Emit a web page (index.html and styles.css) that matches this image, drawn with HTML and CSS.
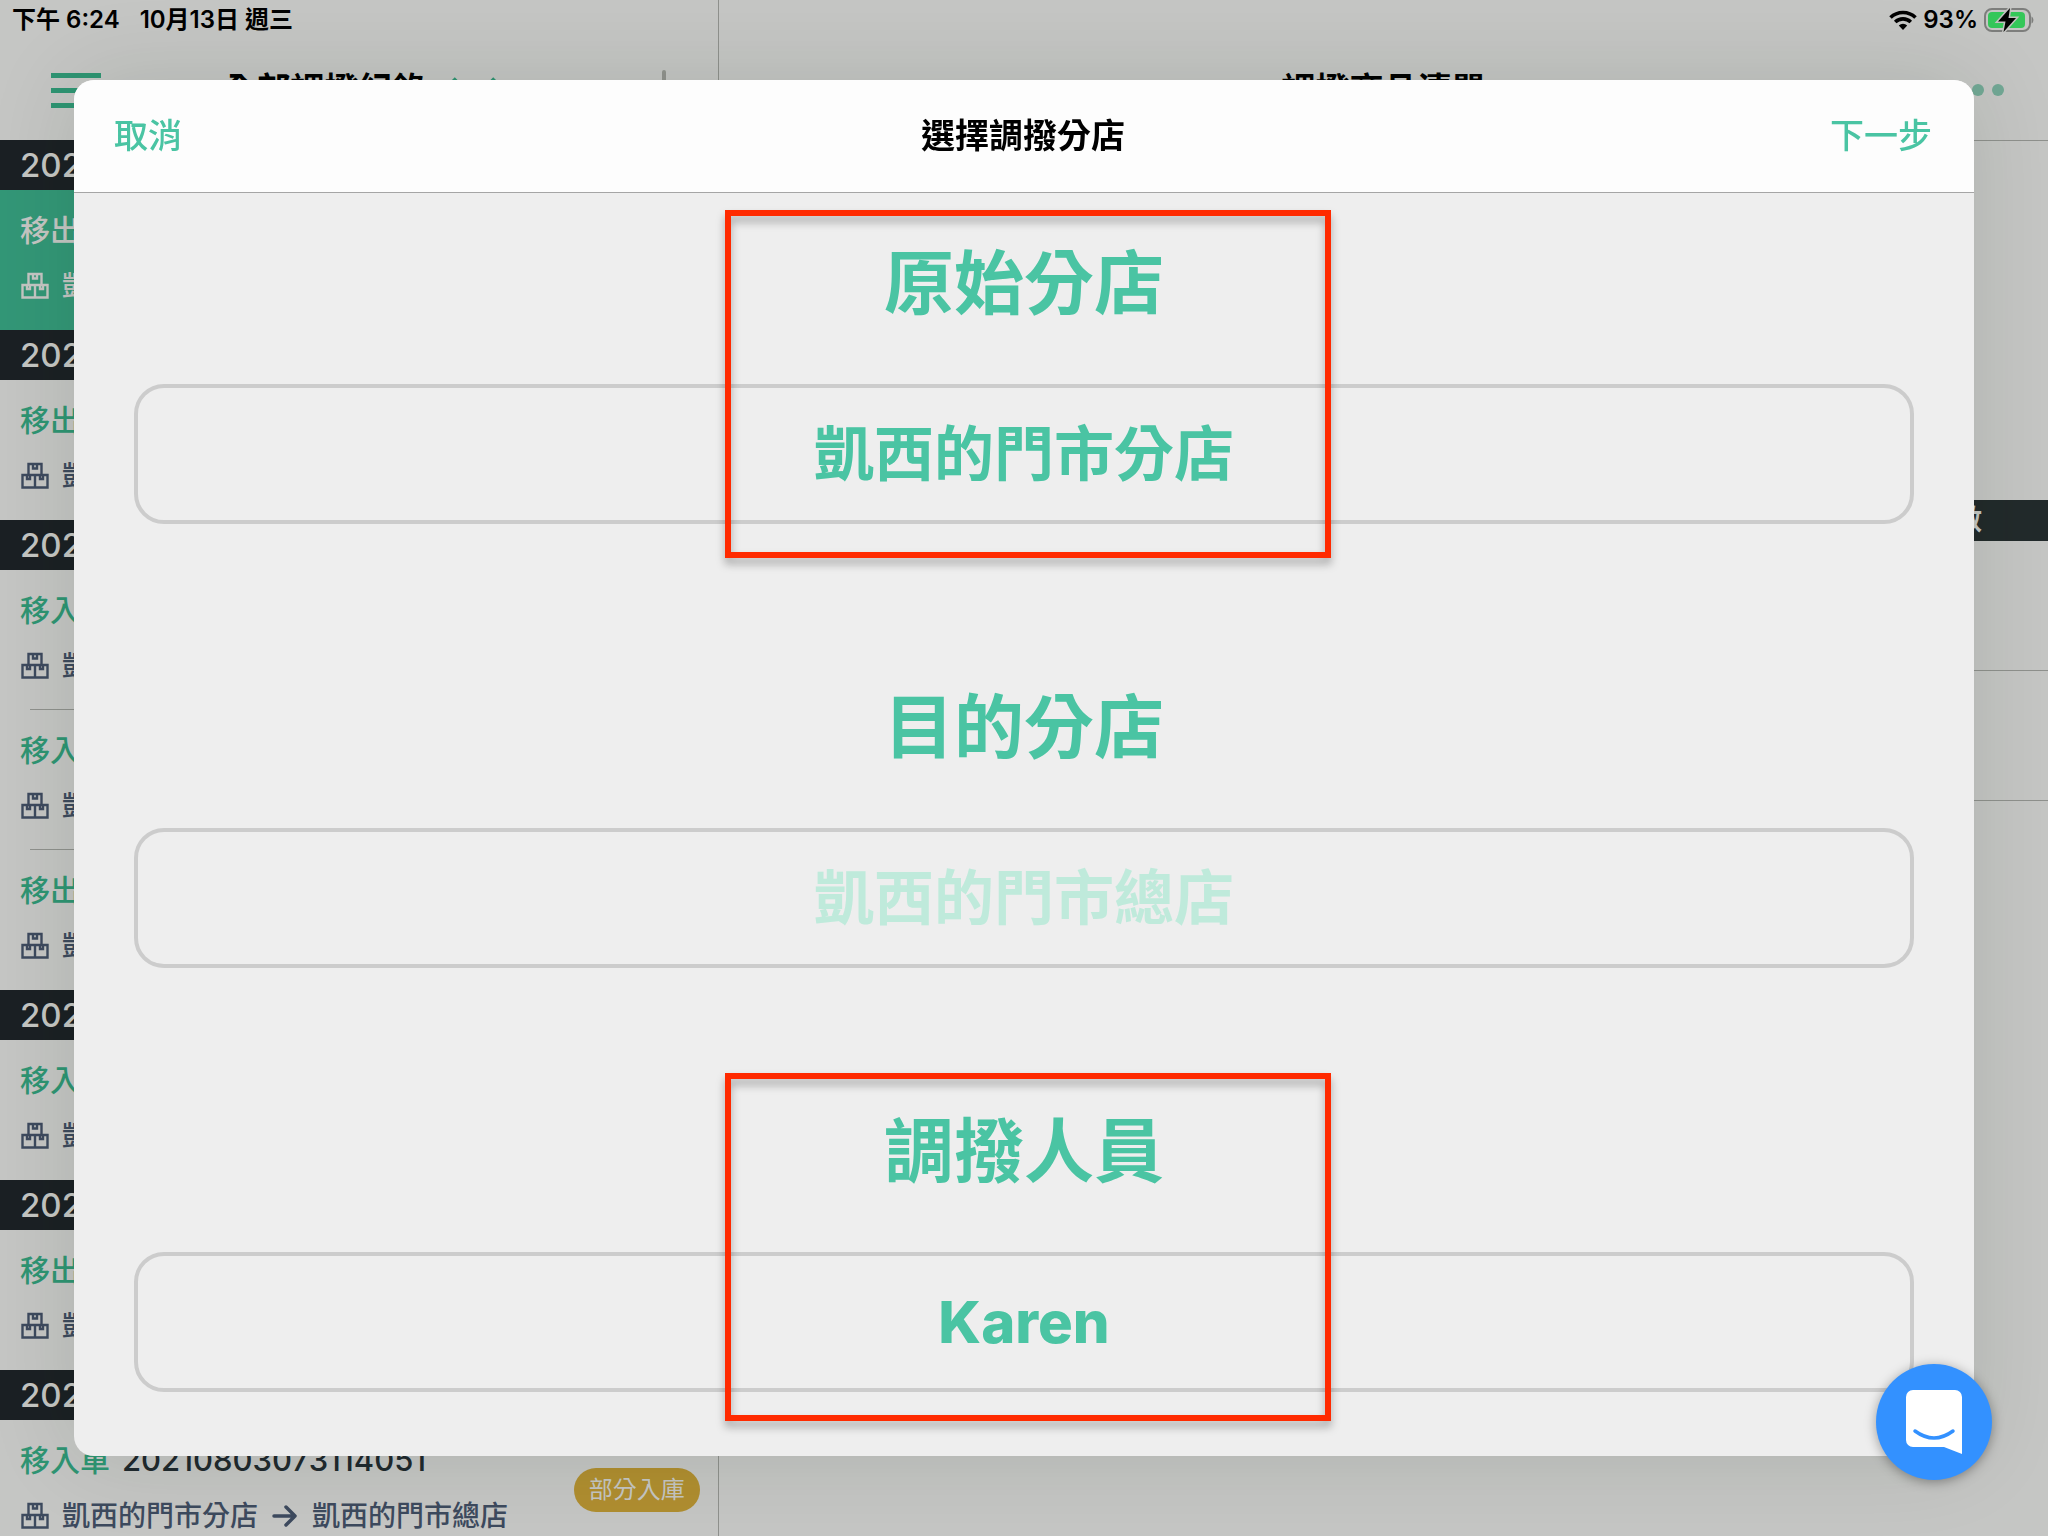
FILE: index.html
```html
<!DOCTYPE html>
<html lang="zh-Hant">
<head>
  <meta charset="UTF-8">
  <meta name="viewport" content="width=device-width, initial-scale=1.0">
  <title>選擇調撥分店</title>
  <link rel="stylesheet" href="styles.css">
</head>
<body>
  <svg class="sprite" aria-hidden="true">
    <symbol id="boxes" viewBox="0 0 28 28">
      <path d="M7.500 13V2h13v11M1.500 13h25v12.500h-25zM14 13v13M12 2v4.500h4V2M6 13v4h3v-4M19 13v4h3v-4" fill="none" stroke="currentColor" stroke-width="2.400"/>
    </symbol>
  </svg>

  <div class="page">
    <div class="status-bar">
      <div class="status-group">
        <span>下午 6:24</span>
        <span>10月13日 週三</span>
      </div>
      <div class="status-group status-right">
        <svg class="wifi" viewBox="0 0 28 20" aria-hidden="true">
          <path d="M1.500 7.500a18 18 0 0 1 25 0M6.200 12a11.300 11.300 0 0 1 15.600 0" fill="none" stroke="#000" stroke-width="3.600"/>
          <path d="M9.800 15.500a6 6 0 0 1 8.400 0L14 20z"/>
        </svg>
        <span>93%</span>
        <svg class="battery" viewBox="0 0 50 24" aria-hidden="true">
          <rect x="1" y="1" width="45" height="22" rx="7" fill="none" stroke="#7d7e7c" stroke-width="2"/>
          <rect x="4" y="4" width="37" height="16" rx="4" fill="#34c759"/>
          <path d="M47.500 8.500c2.500 1 2.500 6 0 7z" fill="#7d7e7c"/>
          <path d="M26 0L14 13.500h7.500L19.500 24 32 10h-7.500z" fill="#000" stroke="#c1c2bf" stroke-width="3" paint-order="stroke"/>
        </svg>
      </div>
    </div>

    <div class="panes">
      <aside class="sidebar">
        <div class="nav">
          <button class="menu" aria-label="選單"><span></span><span></span><span></span></button>
          <h2>全部調撥紀錄
            <svg class="chevron" viewBox="0 0 48 28" aria-hidden="true"><path d="M3 3l21 21L45 3" fill="none" stroke="#2f9573" stroke-width="5"/></svg>
          </h2>
          <button class="add" aria-label="新增">
            <svg viewBox="0 0 40 40" aria-hidden="true"><path d="M20 2v36M2 20h36" stroke="#92948f" stroke-width="4" stroke-linecap="round"/></svg>
          </button>
        </div>
        <div class="list">
          <h3>2021</h3>
          <div class="row active">
            <p class="order">移出單</p>
            <p class="route"><svg><use href="#boxes"/></svg>凱西</p>
          </div>
          <h3>2021</h3>
          <div class="row">
            <p class="order">移出單</p>
            <p class="route"><svg><use href="#boxes"/></svg>凱西</p>
          </div>
          <h3>2021</h3>
          <div class="row">
            <p class="order">移入單</p>
            <p class="route"><svg><use href="#boxes"/></svg>凱西</p>
          </div>
          <div class="row">
            <p class="order">移入單</p>
            <p class="route"><svg><use href="#boxes"/></svg>凱西</p>
          </div>
          <div class="row">
            <p class="order">移出單</p>
            <p class="route"><svg><use href="#boxes"/></svg>凱西</p>
          </div>
          <h3>2021</h3>
          <div class="row">
            <p class="order">移入單</p>
            <p class="route"><svg><use href="#boxes"/></svg>凱西</p>
          </div>
          <h3>2021</h3>
          <div class="row">
            <p class="order">移出單</p>
            <p class="route"><svg><use href="#boxes"/></svg>凱西</p>
          </div>
          <h3>2021</h3>
          <div class="row">
            <p class="order">移入單<span class="number">20210803073114051</span></p>
            <p class="route"><svg><use href="#boxes"/></svg>凱西的門市分店
              <svg class="arrow" viewBox="0 0 26 28"><path d="M2 14h21M14 5l9 9-9 9" fill="none" stroke="currentColor" stroke-width="3.500" stroke-linecap="round" stroke-linejoin="round"/></svg>
              凱西的門市總店</p>
            <span class="badge">部分入庫</span>
          </div>
        </div>
      </aside>

      <main class="detail">
        <div class="nav">
          <h2>調撥商品清單</h2>
          <button class="more" aria-label="更多"><span></span><span></span><span></span></button>
        </div>
        <table>
          <thead><tr><th>件數</th></tr></thead>
          <tbody>
            <tr><td></td></tr>
            <tr><td></td></tr>
          </tbody>
        </table>
      </main>
    </div>
  </div>

  <div class="modal" role="dialog" aria-labelledby="modal-title">
    <header class="modal-header">
      <button class="link">取消</button>
      <h1 id="modal-title">選擇調撥分店</h1>
      <button class="link next">下一步</button>
    </header>
    <div class="modal-body">
      <section class="field">
        <h2 id="from-label">原始分店</h2>
        <button class="picker" aria-labelledby="from-label from-value"><span id="from-value">凱西的門市分店</span></button>
        <div class="callout"></div>
      </section>
      <section class="field">
        <h2 id="to-label">目的分店</h2>
        <button class="picker empty" aria-labelledby="to-label to-value"><span id="to-value">凱西的門市總店</span></button>
      </section>
      <section class="field staff">
        <h2 id="staff-label">調撥人員</h2>
        <button class="picker" aria-labelledby="staff-label staff-value"><span id="staff-value">Karen</span></button>
        <div class="callout"></div>
      </section>
    </div>
  </div>

  <button class="chat" aria-label="客服">
    <svg viewBox="0 0 56 64" aria-hidden="true">
      <path d="M7 0h42a7 7 0 0 1 7 7v57l-18-7H7a7 7 0 0 1-7-7V7a7 7 0 0 1 7-7z" fill="#fff"/>
      <path d="M9 41q19 14 38 0" fill="none" stroke="#3391ff" stroke-width="3.500" stroke-linecap="round"/>
    </svg>
  </button>
</body>
</html>
```

FILE: styles.css
```css
* {
  box-sizing: border-box;
}
body {
  margin: 0;
  height: 100vh;
  overflow: hidden;
  font-family: Inter, "Noto Sans CJK TC", sans-serif;
  color: #000;
}
h1, h2, h3, p {
  margin: 0;
}
button {
  border: none;
  padding: 0;
  background: none;
  font-family: inherit;
  cursor: pointer;
}
.sprite {
  display: none;
}

/* dimmed page behind the dialog */
.page {
  display: flex;
  flex-direction: column;
  height: 100vh;
  background: #c5c6c4;
}
.status-bar {
  display: flex;
  justify-content: space-between;
  align-items: center;
  height: 40px;
  padding: 0 14px 0 12px;
  font-size: 24px;
  font-weight: 600;
  line-height: 28px;
}
.status-group {
  display: flex;
  align-items: center;
  gap: 20px;
}
.status-right {
  gap: 6px;
}
.wifi {
  width: 28px;
  height: 20px;
}
.battery {
  width: 50px;
  height: 24px;
}
.panes {
  display: flex;
  flex: 1;
  margin-top: -40px;
  min-height: 0;
}
.sidebar {
  width: 35.1%;
  border-right: 1px solid #8f918d;
}
.detail {
  flex: 1;
}
.nav {
  display: flex;
  align-items: center;
  justify-content: space-between;
  height: 140px;
  padding: 40px 34px 0 51px;
}
.nav h2 {
  display: flex;
  align-items: center;
  gap: 24px;
  font-size: 34px;
  font-weight: 700;
  line-height: 44px;
}
.sidebar h2 {
  margin-right: 24px;
}
.menu {
  display: flex;
  flex-direction: column;
  gap: 10px;
  width: 50px;
}
.menu span {
  height: 5px;
  background: #2f9573;
}
.chevron {
  width: 48px;
  height: 28px;
}
.add svg {
  display: block;
  width: 40px;
  height: 40px;
}
.list h3 {
  height: 50px;
  padding-left: 20px;
  background: #1b2024;
  color: #c5c6c3;
  font-size: 33px;
  font-weight: 500;
  line-height: 50px;
}
.row {
  position: relative;
  height: 140px;
  padding: 20px 0 0 20px;
  color: #3d4a5e;
}
.row + .row::before {
  content: "";
  position: absolute;
  top: -1px;
  left: 30px;
  right: 0;
  height: 1px;
  background: #8f918d;
}
.order {
  display: flex;
  gap: 12px;
  height: 40px;
  color: #2f9573;
  font-size: 30px;
  font-weight: 500;
  line-height: 40px;
}
.number {
  color: #20292e;
  font-size: 31px;
}
.route {
  display: flex;
  align-items: center;
  gap: 12px;
  height: 40px;
  margin-top: 16px;
  font-size: 28px;
  font-weight: 500;
  line-height: 40px;
}
.route svg {
  width: 30px;
  height: 28px;
}
.active {
  background: #339777;
}
.active, .active .order {
  color: #c5c6c3;
}
.badge {
  position: absolute;
  top: 48px;
  right: 18px;
  padding: 0 15px;
  border-radius: 22px;
  background: #b08e30;
  color: #c5c6c3;
  font-size: 24px;
  line-height: 44px;
}
.detail .nav {
  position: relative;
  justify-content: center;
  padding: 40px 0 0;
  height: 141px;
  border-bottom: 1px solid #8f918d;
}
.more {
  position: absolute;
  right: 44px;
  top: 84px;
  display: flex;
  gap: 8px;
}
.more span {
  width: 12px;
  height: 12px;
  border-radius: 50%;
  background: #72a895;
}
table {
  width: 100%;
  margin-top: 359px;
  border-spacing: 0;
}
th {
  height: 41px;
  padding: 0 66px;
  background: #222a2b;
  color: #c5c6c3;
  font-size: 28px;
  font-weight: 700;
  line-height: 41px;
  text-align: right;
}
td {
  height: 130px;
  padding: 0;
  border-bottom: 1px solid #8f918d;
}

/* dialog */
.modal {
  position: fixed;
  inset: 80px 74px;
  overflow: hidden;
  border-radius: 20px;
  background: #eee;
  box-shadow: 0 0 90px rgba(10, 30, 10, 0.12);
}
.modal-header {
  display: grid;
  grid-template-columns: 1fr auto 1fr;
  align-items: center;
  height: 113px;
  padding: 0 42px 0 40px;
  border-bottom: 1px solid #a5a5a5;
  background: #fdfdfd;
}
.modal-header h1 {
  font-size: 34px;
  font-weight: 700;
  line-height: 44px;
}
.link {
  justify-self: start;
  color: #4ac4a3;
  font-size: 34px;
  font-weight: 500;
  line-height: 44px;
}
.next {
  justify-self: end;
}
.modal-body {
  padding: 41px 60px 0;
}
.field {
  position: relative;
  margin-bottom: 154px;
}
.field h2 {
  margin-bottom: 50px;
  color: #4ac4a3;
  font-size: 70px;
  font-weight: 700;
  line-height: 100px;
  text-align: center;
}
.picker {
  display: block;
  width: 100%;
  height: 140px;
  border: 4px solid #ccc;
  border-radius: 30px;
  color: #4ac4a3;
  font-size: 60px;
  font-weight: 700;
  line-height: 80px;
}
.empty {
  color: #bfeadb;
}
.staff {
  margin-top: -20px;
}
.staff .picker {
  font-size: 58px;
  font-weight: 800;
}
.callout {
  position: absolute;
  top: -24px;
  left: calc(50% - 299px);
  width: 606px;
  height: 348px;
  border: 6px solid #ff2a00;
  filter: drop-shadow(0 6px 4px rgba(0, 0, 0, 0.3));
  pointer-events: none;
}
.staff .callout {
  top: -29px;
}

.chat {
  position: fixed;
  right: 56px;
  bottom: 56px;
  display: flex;
  align-items: center;
  justify-content: center;
  width: 116px;
  height: 116px;
  border-radius: 50%;
  background: #3391ff;
  box-shadow: 0 2px 12px rgba(0, 0, 0, 0.35);
}
.chat svg {
  width: 56px;
  height: 64px;
}
```
